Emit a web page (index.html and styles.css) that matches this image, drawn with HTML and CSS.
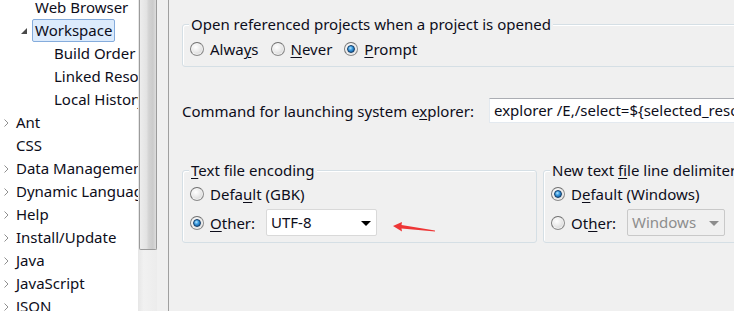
FILE: index.html
```html
<!DOCTYPE html>
<html lang="en">
<head>
    <meta charset="UTF-8">
    <title>Preferences - Workspace</title>
    <link rel="stylesheet" href="styles.css">
</head>
<body>
    <div class="window">
        <div class="tree">
            <div class="row l1"><span class="twisty"></span><span class="label">Web Browser</span></div>
            <div class="row l1">
                <span class="twisty"><svg class="open" width="6" height="6" viewBox="0 0 6 6"><polygon points="6,0 6,6 0,6"/></svg></span>
                <span class="label selected">Workspace</span>
            </div>
            <div class="row l2"><span class="twisty"></span><span class="label">Build Order</span></div>
            <div class="row l2"><span class="twisty"></span><span class="label">Linked Resources</span></div>
            <div class="row l2"><span class="twisty"></span><span class="label">Local History</span></div>
            <div class="row"><span class="twisty"><svg class="chev" width="5" height="8" viewBox="0 0 5 8"><path d="M0.5 0.5 L4 4 L0.5 7.5"/></svg></span><span class="label">Ant</span></div>
            <div class="row"><span class="twisty"></span><span class="label">CSS</span></div>
            <div class="row"><span class="twisty"><svg class="chev" width="5" height="8" viewBox="0 0 5 8"><path d="M0.5 0.5 L4 4 L0.5 7.5"/></svg></span><span class="label">Data Management</span></div>
            <div class="row"><span class="twisty"><svg class="chev" width="5" height="8" viewBox="0 0 5 8"><path d="M0.5 0.5 L4 4 L0.5 7.5"/></svg></span><span class="label">Dynamic Languages</span></div>
            <div class="row"><span class="twisty"><svg class="chev" width="5" height="8" viewBox="0 0 5 8"><path d="M0.5 0.5 L4 4 L0.5 7.5"/></svg></span><span class="label">Help</span></div>
            <div class="row"><span class="twisty"><svg class="chev" width="5" height="8" viewBox="0 0 5 8"><path d="M0.5 0.5 L4 4 L0.5 7.5"/></svg></span><span class="label">Install/Update</span></div>
            <div class="row"><span class="twisty"><svg class="chev" width="5" height="8" viewBox="0 0 5 8"><path d="M0.5 0.5 L4 4 L0.5 7.5"/></svg></span><span class="label">Java</span></div>
            <div class="row"><span class="twisty"><svg class="chev" width="5" height="8" viewBox="0 0 5 8"><path d="M0.5 0.5 L4 4 L0.5 7.5"/></svg></span><span class="label">JavaScript</span></div>
            <div class="row"><span class="twisty"><svg class="chev" width="5" height="8" viewBox="0 0 5 8"><path d="M0.5 0.5 L4 4 L0.5 7.5"/></svg></span><span class="label">JSON</span></div>
        </div>
        <div class="vscroll"><div class="thumb"></div></div>
        <div class="sash"></div>
        <div class="prefs">
            <div class="group group-open">
                <div class="group-title">Open referenced projects when a project is opened</div>
                <div class="radios">
                    <span class="opt"><span class="radio"></span>Alwa<u>y</u>s</span>
                    <span class="opt"><span class="radio"></span><u>N</u>ever</span>
                    <span class="opt"><span class="radio on"></span><u>P</u>rompt</span>
                </div>
            </div>

            <div class="cmd">
                <span class="cmd-label">Command for launching system e<u>x</u>plorer:</span>
                <div class="textbox">explorer /E,/select=${selected_resource_loc}</div>
            </div>

            <div class="groups">
                <div class="group group-enc">
                    <div class="group-title"><u>T</u>ext file encoding</div>
                    <div class="opt-row"><span class="radio"></span>Defa<u>u</u>lt (GBK)</div>
                    <div class="opt-row tall">
                        <span class="radio on"></span><span class="opt-label"><u>O</u>ther:</span>
                        <div class="combo">UTF-8<span class="caret"></span></div>
                    </div>
                </div>
                <div class="group group-nl">
                    <div class="group-title">New text <u>f</u>ile line delimiter</div>
                    <div class="opt-row"><span class="radio on"></span>D<u>e</u>fault (Windows)</div>
                    <div class="opt-row tall">
                        <span class="radio"></span><span class="opt-label">Ot<u>h</u>er:</span>
                        <div class="combo disabled">Windows<span class="caret"></span></div>
                    </div>
                </div>
            </div>

            <svg class="arrow" width="46" height="16" viewBox="0 0 46 16">
                <polygon points="3,8 12,4 11.5,7 45,12.4 45,13.4 11.5,10.5 12,13.5"/>
            </svg>
        </div>
    </div>
</body>
</html>
```

FILE: styles.css
```css
body {
    margin: 0;
    background: #f0f0f0;
    font-family: "Noto Sans", "Open Sans", sans-serif;
    font-size: 15px;
    color: #0d0d1a;
    overflow: hidden;
}

u {
    text-decoration-thickness: 1px;
    text-underline-offset: 2px;
}

.window {
    display: flex;
    height: 311px;
    overflow: hidden;
}

/* tree on the left */
.tree {
    width: 138px;
    flex: 0 0 138px;
    background: #fff;
    overflow: hidden;
    white-space: nowrap;
}

.row {
    display: flex;
    align-items: center;
    height: 23px;
}

.row:first-child {
    margin-top: -4px;
}

.row.l1 {
    padding-left: 19px;
}

.row.l2 {
    padding-left: 38px;
}

.twisty {
    width: 16px;
    flex: 0 0 16px;
    display: flex;
    align-items: center;
    padding-left: 3px;
    box-sizing: border-box;
}

.twisty .open {
    fill: #4a4a4a;
    margin-left: -1px;
    margin-top: 1px;
}

.twisty .chev {
    fill: none;
    stroke: #8f8f8f;
    stroke-width: 1;
    margin-left: 1px;
}

.label {
    line-height: 21px;
    border: 1px solid transparent;
    padding: 0 2px;
    margin-left: -3px;
    border-radius: 2px;
}

.label.selected {
    background: #dcebfc;
    border-color: #85acdc;
}

/* scrollbar */
.vscroll {
    width: 19px;
    flex: 0 0 19px;
    background: linear-gradient(to right, #e6e6e6, #f1f1f1 30%, #ececec);
}

.thumb {
    margin-left: 1px;
    width: 16px;
    height: 249px;
    border: 1px solid #9b9b9b;
    border-top: none;
    border-radius: 0 0 2px 2px;
    background: linear-gradient(to right, #ededed 0%, #e3e3e3 40%, #d3d3d3 55%, #cbcbcb 80%, #dcdcdc 100%);
}

.sash {
    width: 11px;
    flex: 0 0 11px;
    border-right: 1px solid #a0a0a0;
    background: #f0f0f0;
}

/* preference page */
.prefs {
    position: relative;
    flex: 0 0 auto;
    width: 600px;
    padding: 24px 0 0 13px;
}

.group {
    border: 1px solid #d5dfe5;
    border-radius: 3px;
    box-shadow: inset 1px 1px 0 #fff;
}

.group-title {
    width: fit-content;
    line-height: 20px;
    margin: -11px 0 0 6px;
    padding: 0 2px;
    background: #f0f0f0;
    white-space: nowrap;
}

.group-open {
    width: 620px;
    padding-bottom: 6px;
}

.radios {
    display: flex;
    height: 22px;
    align-items: center;
    margin-top: 4px;
    padding-left: 7px;
}

.opt {
    display: flex;
    align-items: center;
    margin-right: 12px;
}

.radio {
    width: 14px;
    height: 14px;
    flex: 0 0 14px;
    box-sizing: border-box;
    border-radius: 50%;
    border: 1px solid #8c8c8c;
    border-top-color: #6f6f6f;
    border-left-color: #7a7a7a;
    background: radial-gradient(circle at 40% 35%, #ffffff 0%, #ececec 40%, #c9c9c9 100%);
    box-shadow: inset 0 0 0 1px rgba(255, 255, 255, 0.6);
    margin-right: 6px;
    display: flex;
    align-items: center;
    justify-content: center;
}

.radio.on::after {
    content: "";
    width: 8px;
    height: 8px;
    box-sizing: border-box;
    border-radius: 50%;
    border: 1px solid #0f3a66;
    background: radial-gradient(circle at 40% 35%, #b5e6ff 0%, #3a9be0 40%, #0b4a8c 100%);
}

.cmd {
    display: flex;
    align-items: center;
    margin-top: 31px;
    height: 25px;
    white-space: nowrap;
}

.cmd-label {
    width: 307px;
    flex: 0 0 307px;
}

.textbox {
    flex: 0 0 auto;
    width: 300px;
    height: 25px;
    line-height: 23px;
    box-sizing: border-box;
    background: #fff;
    border: 1px solid #e3e9ef;
    border-top-color: #abadb3;
    padding-left: 4px;
    white-space: nowrap;
}

.groups {
    display: flex;
    gap: 6px;
    margin-top: 47px;
}

.group-enc {
    width: 355px;
    flex: 0 0 355px;
    box-sizing: border-box;
    padding-bottom: 6px;
}

.group-nl {
    flex: 0 0 260px;
    padding-bottom: 6px;
}

.opt-row {
    display: flex;
    align-items: center;
    height: 22px;
    margin-top: 3px;
    padding-left: 7px;
    white-space: nowrap;
}

.opt-row.tall {
    height: 27px;
    margin-top: 4px;
}

.opt-label {
    width: 56px;
    flex: 0 0 56px;
}

.combo {
    position: relative;
    box-sizing: border-box;
    width: 111px;
    height: 27px;
    line-height: 25px;
    padding-left: 4px;
    background: #fff;
    border: 1px solid #d9d9d9;
    border-radius: 2px;
}

.combo .caret {
    position: absolute;
    right: 5px;
    top: 11px;
    width: 0;
    height: 0;
    border-left: 5px solid transparent;
    border-right: 5px solid transparent;
    border-top: 5px solid #000;
}

.combo.disabled {
    width: 98px;
    background: #f0f0f0;
    border-color: #c9c9c9;
    color: #8d8d8d;
}

.combo.disabled .caret {
    border-top-color: #8d8d8d;
}

.arrow {
    position: absolute;
    left: 221px;
    top: 218px;
    fill: #ee3636;
}
```
